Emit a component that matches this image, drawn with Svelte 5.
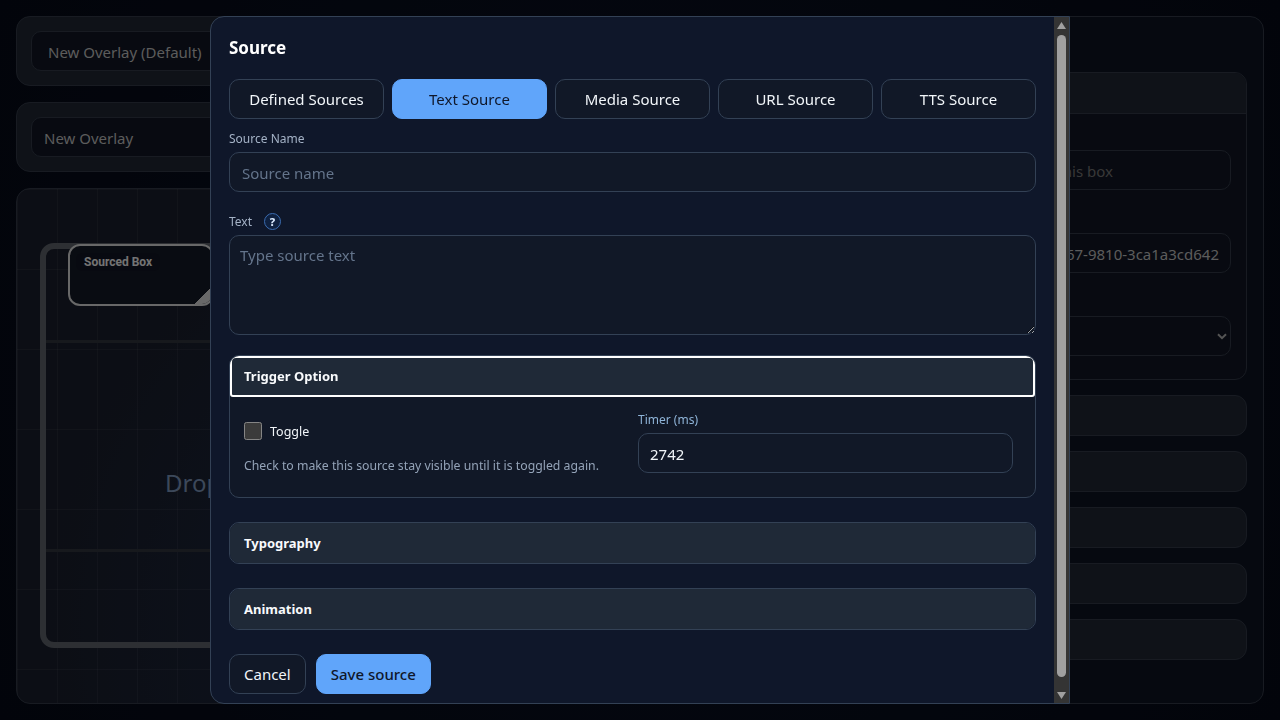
<script>
  let sourceName = $state('');
  let sourceText = $state('');
  let timer = $state('2742');
  let toggle = $state(false);
  let activeTab = $state('Text Source');
  let openSection = $state('Trigger Option');

  const tabs = ['Defined Sources', 'Text Source', 'Media Source', 'URL Source', 'TTS Source'];
  const sideRows = ['Layout', 'Appearance', 'Sources', 'Events', 'Advanced'];
</script>

<div class="page">
  <div class="left-col">
    <div class="bar">
      <div class="field default-name">New Overlay (Default)</div>
    </div>
    <div class="bar">
      <div class="field">New Overlay</div>
    </div>
    <div class="stage">
      <div class="canvas">
        <div class="guide guide-top"></div>
        <div class="guide guide-bottom"></div>
        <div class="drop-text">Drop</div>
        <div class="box">
          <span class="box-label">Sourced Box</span>
          <span class="box-handle"></span>
        </div>
      </div>
    </div>
  </div>

  <div class="right-col">
    <div class="side-card">
      <div class="side-head">Box</div>
      <div class="side-body">
        <div class="field dim first">Give a label to show on this box</div>
        <div class="field id-field">a1f3c2d4-5b67-9810-3ca1a3cd642</div>
        <div class="field select-field">
          <svg width="10" height="7" viewBox="0 0 10 7"><path d="M1 1.2 5 5.2 9 1.2" fill="none" stroke="currentColor" stroke-width="2"/></svg>
        </div>
      </div>
    </div>
    {#each sideRows as row}
      <div class="side-row"><span>{row}</span></div>
    {/each}
  </div>
</div>

<div class="overlay">
  <div class="modal">
    <div class="modal-content">
      <h2>Source</h2>
      <div class="tabs">
        {#each tabs as tab}
          <button class="tab" class:active={activeTab === tab} onclick={() => (activeTab = tab)}>{tab}</button>
        {/each}
      </div>

      <label class="label name-label" for="source-name">Source Name</label>
      <input id="source-name" class="input" placeholder="Source name" bind:value={sourceName} />

      <div class="text-label">
        <label class="label" for="source-text">Text</label>
        <span class="help">?</span>
      </div>
      <textarea id="source-text" class="input area" placeholder="Type source text" bind:value={sourceText}></textarea>

      <section class="acc open">
        <button class="acc-head focused" onclick={() => (openSection = 'Trigger Option')}>Trigger Option</button>
        <div class="acc-body">
          <div class="toggle-col">
            <label class="toggle"><input type="checkbox" bind:checked={toggle} /> <span>Toggle</span></label>
            <p class="hint">Check to make this source stay visible until it is toggled again.</p>
          </div>
          <div class="timer-col">
            <label class="label timer-label" for="timer">Timer (ms)</label>
            <input id="timer" class="input timer" bind:value={timer} />
          </div>
        </div>
      </section>

      <section class="acc"><button class="acc-head">Typography</button></section>
      <section class="acc"><button class="acc-head">Animation</button></section>

      <div class="actions">
        <button class="btn">Cancel</button>
        <button class="btn primary">Save source</button>
      </div>
    </div>

    <!-- headless chrome hides real scrollbars so this one is drawn -->
    <div class="scrollbar">
      <svg class="arrow-up" width="9" height="7" viewBox="0 0 9 7"><path d="M4.5 0 9 7H0z" fill="#a0a0a0"/></svg>
      <div class="thumb"></div>
      <svg class="arrow-down" width="9" height="7" viewBox="0 0 9 7"><path d="M0 0h9L4.5 7z" fill="#a0a0a0"/></svg>
    </div>
  </div>
</div>

<style>
  :global(body) {
    margin: 0;
    background: #0a1228;
    overflow: hidden;
    font-family: "Noto Sans", "Open Sans", sans-serif;
    color-scheme: dark;
  }

  .page {
    box-sizing: border-box;
    width: 1280px;
    height: 720px;
    padding: 16px;
    display: grid;
    grid-template-columns: 820px 1fr;
    gap: 16px;
    background: radial-gradient(circle at 50% 50%, #0a1122, #050916);
  }

  .left-col {
    display: flex;
    flex-direction: column;
    gap: 16px;
    min-height: 0;
  }

  .bar {
    height: 70px;
    box-sizing: border-box;
    padding: 14px;
    background: #1e2430;
    border: 1px solid #303745;
    border-radius: 14px;
  }

  .field {
    box-sizing: border-box;
    height: 40px;
    line-height: 41px;
    padding: 0 12px;
    background: #101522;
    border: 1px solid #303745;
    border-radius: 10px;
    color: #b8b8b8;
    font-size: 15px;
    white-space: nowrap;
    overflow: hidden;
  }

  .default-name {
    padding-left: 16px;
  }

  .stage {
    flex: 1;
    position: relative;
    border: 1px solid #303745;
    border-radius: 14px;
    overflow: hidden;
    background-color: #181d2a;
    background-image:
      linear-gradient(to right, rgba(255, 255, 255, 0.05) 1px, transparent 1px),
      linear-gradient(to bottom, rgba(255, 255, 255, 0.05) 1px, transparent 1px),
      radial-gradient(circle at 60% 85%, #1a2844, #191d2a 70%);
    background-size: 40px 80px, 40px 80px, 100% 100%;
    background-position: 0 0, 0 0, 0 0;
  }

  .canvas {
    position: absolute;
    left: 23px;
    top: 54px;
    width: 720px;
    height: 405px;
    box-sizing: border-box;
    border: 6px solid #5a5e66;
    border-radius: 14px;
  }

  .guide {
    position: absolute;
    left: 0;
    right: 0;
    height: 3px;
    background: #2f323a;
  }

  .guide-top {
    top: 91px;
  }

  .guide-bottom {
    top: 300px;
  }

  .drop-text {
    position: absolute;
    left: 119px;
    top: 217px;
    font-size: 24px;
    color: #7890b4;
    white-space: nowrap;
  }

  .box {
    position: absolute;
    left: 22px;
    top: -5px;
    width: 146px;
    height: 62px;
    box-sizing: border-box;
    background: #131824;
    border: 2px solid #d0d0d0;
    border-radius: 12px;
    overflow: hidden;
  }

  .box-label {
    position: absolute;
    left: 6px;
    top: 7px;
    padding: 2px 8px;
    border-radius: 6px;
    background: #111522;
    font-family: Roboto, sans-serif;
    font-weight: 700;
    font-size: 12px;
    color: #e8e8e8;
  }

  .box-handle {
    position: absolute;
    right: 0;
    bottom: 0;
    width: 18px;
    height: 18px;
    background: linear-gradient(135deg, transparent 50%, #d0d0d0 50%);
  }

  .right-col {
    display: flex;
    flex-direction: column;
    gap: 15px;
    padding: 55px 16px 0;
    border: 1px solid #303745;
    border-radius: 14px;
    background: #0c1220;
    min-width: 0;
  }

  .side-card {
    border: 1px solid #303745;
    border-radius: 12px;
    height: 308px;
    flex: none;
    box-sizing: border-box;
    overflow: hidden;
    background: #101522;
  }

  .side-head {
    height: 40px;
    line-height: 40px;
    padding: 0 16px;
    background: #1e2430;
    border-bottom: 1px solid #303745;
    color: #b8b8b8;
    font-size: 14px;
    font-weight: 700;
  }

  .side-body {
    padding: 36px 15px 0;
    display: flex;
    flex-direction: column;
    gap: 43px;
  }

  .dim {
    color: #707070;
    padding-left: 5px;
  }

  .id-field {
    text-align: right;
    padding-right: 11px;
  }

  .select-field {
    display: flex;
    align-items: center;
    justify-content: flex-end;
    padding-right: 3px;
  }

  .select-field svg {
    color: #a8a8a8;
  }

  .side-row {
    height: 41px;
    box-sizing: border-box;
    line-height: 40px;
    padding: 0 16px;
    border: 1px solid #303745;
    border-radius: 12px;
    background: #1e2430;
    color: #b8b8b8;
    font-size: 14px;
    font-weight: 700;
  }

  .overlay {
    position: fixed;
    inset: 0;
    display: flex;
    justify-content: center;
    align-items: flex-start;
    padding-top: 16px;
    box-sizing: border-box;
    background: rgba(0, 0, 0, 0.5);
  }

  .modal {
    box-sizing: border-box;
    width: 860px;
    height: 688px;
    overflow: hidden;
    display: flex;
    background: #0f172a;
    border: 1px solid #334155;
    border-radius: 14px 0 0 14px;
    color: #f1f5f9;
  }

  .modal-content {
    flex: 1;
    min-width: 0;
    padding: 18px;
    display: flex;
    flex-direction: column;
  }

  .scrollbar {
    flex: none;
    width: 15px;
    display: flex;
    flex-direction: column;
    align-items: center;
    background: #343434;
  }

  .arrow-up {
    margin-top: 5px;
  }

  .thumb {
    width: 9px;
    height: 642px;
    margin-top: 6px;
    border-radius: 5px;
    background: #a0a0a0;
  }

  .arrow-down {
    margin-top: 15px;
  }

  h2 {
    margin: 0 0 18px;
    font-size: 17px;
    line-height: 26px;
    font-weight: 700;
    color: #fff;
  }

  .tabs {
    display: grid;
    grid-template-columns: repeat(5, 1fr);
    gap: 8px;
    flex: none;
  }

  button {
    font-family: inherit;
    cursor: pointer;
  }

  .tab,
  .btn {
    box-sizing: border-box;
    height: 40px;
    border: 1px solid #334155;
    border-radius: 10px;
    background: #111827;
    color: #f1f5f9;
    font-size: 15px;
    padding: 0 14px;
  }

  .tab.active,
  .btn.primary {
    background: #60a5fa;
    border-color: #60a5fa;
    color: #0f172a;
  }

  .label {
    display: block;
    font-size: 12px;
    line-height: 18px;
    color: #a4b2c6;
  }

  .name-label {
    margin-top: 11px;
    margin-bottom: 4px;
  }

  .input {
    box-sizing: border-box;
    flex: none;
    width: 100%;
    height: 40px;
    padding: 2px 12px 0;
    font-family: inherit;
    font-size: 15px;
    color: #f1f5f9;
    background: #111827;
    border: 1px solid #334155;
    border-radius: 10px;
    outline: none;
  }

  .input::placeholder {
    color: #64748b;
  }

  .text-label {
    flex: none;
    display: flex;
    align-items: center;
    gap: 12px;
    margin-top: 21px;
    height: 18px;
    margin-bottom: 4px;
  }

  .help {
    width: 17px;
    height: 17px;
    margin-top: -2px;
    box-sizing: border-box;
    border: 1px solid #3b6cb0;
    border-radius: 50%;
    background: #0f2140;
    color: #dbeafe;
    font-size: 11px;
    font-weight: 800;
    line-height: 15px;
    text-align: center;
  }

  .area {
    height: 100px;
    padding: 9px 10px;
    resize: vertical;
  }

  .acc {
    flex: none;
    margin-top: 24px;
    border: 1px solid #334155;
    border-radius: 10px;
    background: #111827;
    overflow: hidden;
  }

  .acc.open {
    margin-top: 20px;
  }

  .acc-head {
    display: block;
    box-sizing: border-box;
    width: 100%;
    height: 40px;
    padding: 0 14px;
    border: none;
    background: #1f2937;
    color: #f8fafc;
    font-size: 13px;
    font-weight: 700;
    text-align: left;
  }

  .acc-head.focused {
    height: 41px;
    padding: 0 12px 2px;
    border: 2px solid #fff;
    border-radius: 6px 6px 3px 3px;
  }

  .acc-body {
    display: grid;
    grid-template-columns: 394px 375px;
    height: 100px;
    box-sizing: border-box;
    padding: 14px 14px 0;
  }

  .toggle {
    display: flex;
    align-items: center;
    gap: 8px;
    margin-top: 11px;
    font-size: 12.5px;
    color: #f1f5f9;
  }

  .toggle input {
    width: 18px;
    height: 18px;
    margin: 0;
    flex: none;
  }

  .hint {
    margin: 17px 0 0;
    font-size: 12.28px;
    line-height: 18px;
    color: #94a3b8;
    white-space: nowrap;
  }

  .timer-label {
    color: #8fb4d8;
    margin-bottom: 4px;
  }

  .timer {
    font-size: 15px;
    padding-left: 11px;
  }

  .actions {
    flex: none;
    display: flex;
    gap: 10px;
    margin-top: 24px;
  }

  .btn.primary {
    font-weight: 500;
  }
</style>
